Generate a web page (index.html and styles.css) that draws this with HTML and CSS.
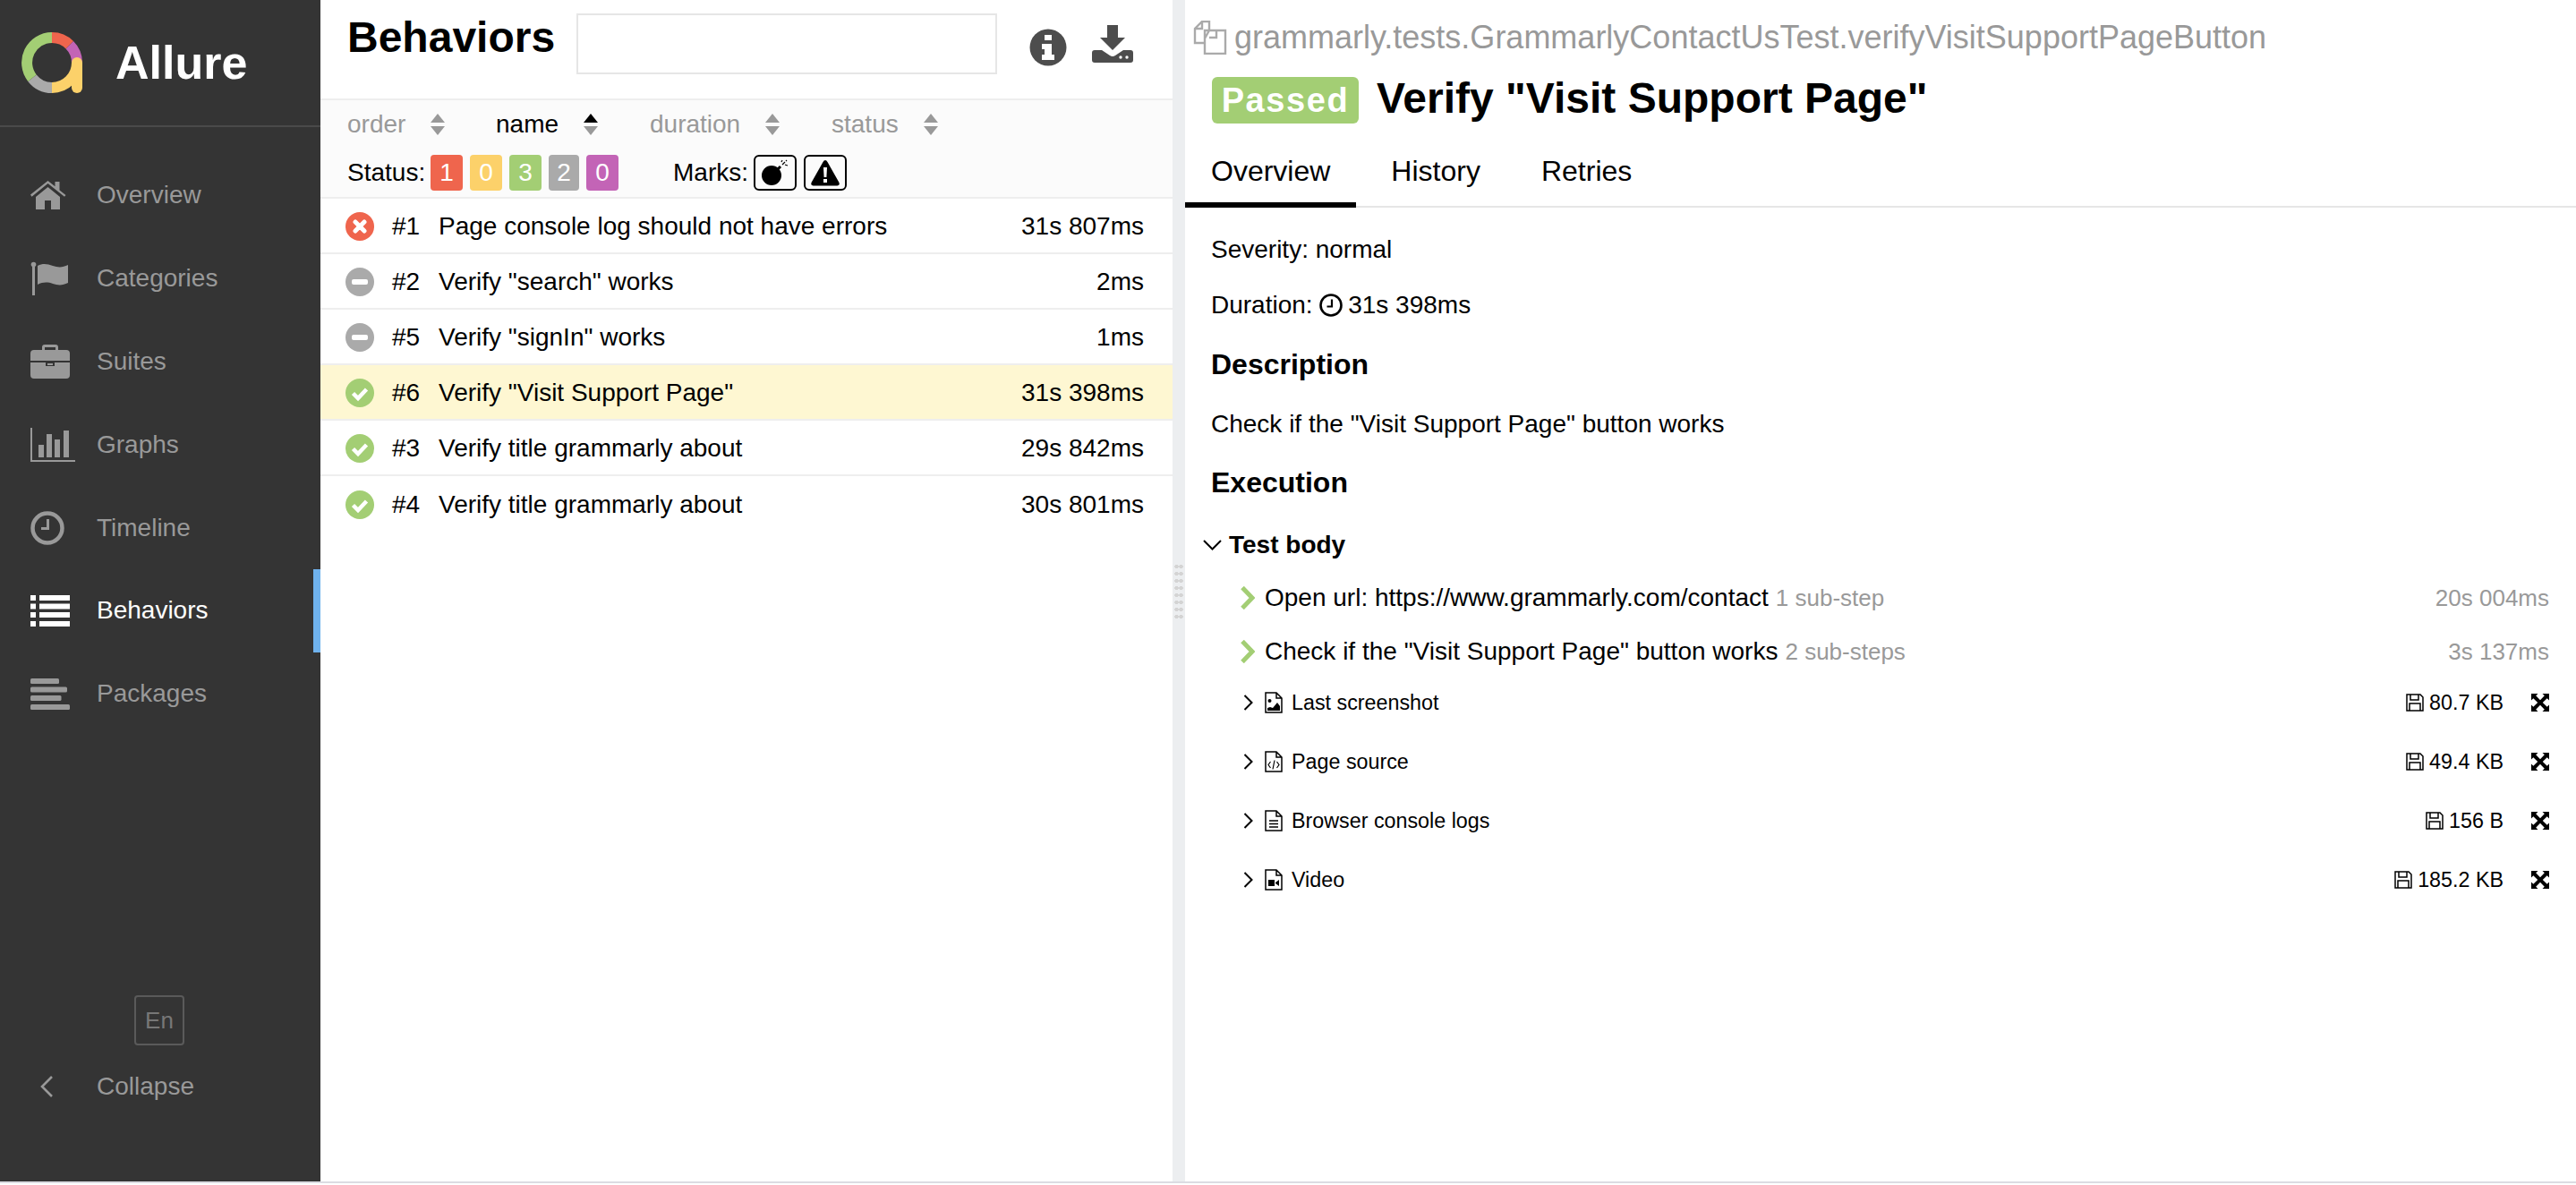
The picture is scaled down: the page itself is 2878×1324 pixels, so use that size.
FILE: index.html
```html
<!DOCTYPE html>
<html lang="en">
<head>
    <meta charset="UTF-8">
    <title>Allure Report</title>
    <link rel="stylesheet" href="styles.css">
</head>
<body>
    <div class="app">
        <!-- Side navigation -->
        <aside class="side">
            <div class="brand">
                <svg class="brand-logo" viewBox="0 0 68 68">
                    <path d="M34 6A28 28 0 0 1 53.8 14.2" fill="none" stroke="#ef654d" stroke-width="12"/>
                    <path d="M53.8 14.2A28 28 0 0 1 62 34" fill="none" stroke="#c364b6" stroke-width="12"/>
                    <path d="M62 34A28 28 0 0 1 34 62" fill="none" stroke="#fcd16a" stroke-width="12"/>
                    <path d="M62 34V62" fill="none" stroke="#fcd16a" stroke-width="12" stroke-linecap="round"/>
                    <path d="M34 62A28 28 0 0 1 12 51.2" fill="none" stroke="#aaa" stroke-width="12"/>
                    <path d="M12 51.2A28 28 0 0 1 34 6" fill="none" stroke="#a3ce74" stroke-width="12"/>
                </svg>
                <span class="brand-name">Allure</span>
            </div>
            <nav class="nav">
                <a class="nav-item">
                    <span class="nav-icon"><svg width="40" height="32" viewBox="0 0 40 32"><path d="M0 15.5 19.5 0l8 6.3V1h5v9.4l7 5.6-1.500 1.800L19.500 3 1.500 17.800z M6 18 19.500 7 33 18v14H23V22h-7v10H6z" fill="currentColor"/></svg></span>
                    <span>Overview</span>
                </a>
                <a class="nav-item">
                    <span class="nav-icon"><svg width="44" height="38" viewBox="0 0 44 38"><circle cx="3.500" cy="3.500" r="2.800" fill="currentColor"/><rect x="2" y="4" width="3" height="34" fill="currentColor"/><path d="M8 5c6-3 11-2 17 0 6 2 11 2 17-1v20c-6 3-11 3-17 1-6-2-11-2-17 1z" fill="currentColor"/></svg></span>
                    <span>Categories</span>
                </a>
                <a class="nav-item">
                    <span class="nav-icon"><svg width="44" height="38" viewBox="0 0 44 38"><path d="M13 6V3q0-3 3-3h12q3 0 3 3v3h9q4 0 4 4v8H0v-8q0-4 4-4z M16 6h12V3H16z" fill="currentColor" fill-rule="evenodd"/><path d="M0 20h17v4h10v-4h17v14q0 4-4 4H4q-4 0-4-4z M19 21h6v2h-6z" fill="currentColor"/></svg></span>
                    <span>Suites</span>
                </a>
                <a class="nav-item">
                    <span class="nav-icon"><svg width="50" height="38" viewBox="0 0 50 38"><path d="M0 0h2v36h48v2H0z M9 19h6v14H9z M18 7h6v26h-6z M27 13h6v20h-6z M37 3h6v30h-6z" fill="currentColor"/></svg></span>
                    <span>Graphs</span>
                </a>
                <a class="nav-item">
                    <span class="nav-icon"><svg width="38" height="38" viewBox="0 0 38 38"><circle cx="19" cy="19" r="16.500" fill="none" stroke="currentColor" stroke-width="4.500"/><path d="M21 9v12h-9v-3h6V9z" fill="currentColor"/></svg></span>
                    <span>Timeline</span>
                </a>
                <a class="nav-item nav-item-active">
                    <span class="nav-icon"><svg width="44" height="35" viewBox="0 0 44 35"><path d="M0 0h6v6H0z M10 0h34v6H10z M0 9.500h6v6H0z M10 9.500h34v6H10z M0 19h6v6H0z M10 19h34v6H10z M0 29h6v6H0z M10 29h34v6H10z" fill="currentColor"/></svg></span>
                    <span>Behaviors</span>
                </a>
                <a class="nav-item">
                    <span class="nav-icon"><svg width="44" height="35" viewBox="0 0 44 35"><rect width="32" height="6" rx="1.500" fill="currentColor"/><rect y="9.500" width="41" height="6" rx="1.500" fill="currentColor"/><rect y="19" width="34.500" height="6" rx="1.500" fill="currentColor"/><rect y="29" width="44" height="6" rx="1.500" fill="currentColor"/></svg></span>
                    <span>Packages</span>
                </a>
            </nav>
            <div class="side-foot">
                <div class="lang-box">En</div>
                <a class="collapse">
                    <span class="collapse-icon"><svg width="16" height="26" viewBox="0 0 16 26"><path d="M14 2 3 13l11 11" fill="none" stroke="currentColor" stroke-width="2.600"/></svg></span>
                    <span>Collapse</span>
                </a>
            </div>
        </aside>

        <!-- Behaviors tree -->
        <section class="tree">
            <div class="tree-head">
                <h2 class="tree-title">Behaviors</h2>
                <input class="tree-search" type="text">
                <svg class="tree-info" width="42" height="42" viewBox="0 0 42 42"><circle cx="21" cy="21" r="20.500" fill="#4d4d4d"/><path d="M17 7h8v6h-8z M14 17h11v12h3v6H14v-6h3v-6h-3z" fill="#fff"/></svg>
                <svg class="tree-download" width="46" height="42" viewBox="0 0 46 42"><path d="M17 0h12v14h8L23 28 9 14h8z" fill="#4d4d4d"/><path d="M0 31q0-3 3-3h8l9 6q3 2 6 0l9-6h8q3 0 3 3v8q0 3-3 3H3q-3 0-3-3z" fill="#4d4d4d"/><circle cx="32" cy="36" r="1.700" fill="#fff"/><circle cx="39" cy="36" r="1.700" fill="#fff"/></svg>
            </div>
            <div class="filters">
                <div class="sorters">
                    <span class="sorter sorter-order">order <i class="sort-arrows"></i></span>
                    <span class="sorter sorter-name sorter-active">name <i class="sort-arrows"></i></span>
                    <span class="sorter sorter-duration">duration <i class="sort-arrows"></i></span>
                    <span class="sorter sorter-status">status <i class="sort-arrows"></i></span>
                </div>
                <div class="marks-line">
                    <span class="status-label">Status:</span>
                    <span class="count count-failed">1</span>
                    <span class="count count-broken">0</span>
                    <span class="count count-passed">3</span>
                    <span class="count count-skipped">2</span>
                    <span class="count count-unknown">0</span>
                    <span class="marks-label">Marks:</span>
                    <span class="mark">
                        <svg width="34" height="30" viewBox="0 0 34 30"><circle cx="13" cy="18" r="11" fill="#000"/><path d="M20 11l3-3" stroke="#000" stroke-width="3"/><path d="M25 6l3-3 M28 6l3 1 M24 3l1-2 M29 2l1-1" stroke="#000" stroke-width="1.200"/></svg>
                    </span>
                    <span class="mark">
                        <svg width="34" height="30" viewBox="0 0 34 30"><path d="M17 1q1.500 0 2.500 2l13 23q1 3-2 3.500h-27q-3-.5-2-3.500l13-23q1-2 2.500-2z" fill="#000"/><path d="M15 9h4l-.6 11h-2.800z M15 22h4v4h-4z" fill="#fff"/></svg>
                    </span>
                </div>
            </div>
            <div class="tree-rows">
                <a class="row">
                    <svg class="row-icon" viewBox="0 0 32 32"><circle cx="16" cy="16" r="16" fill="#ef654d"/><path d="M11 11l10 10M21 11 11 21" stroke="#fff" stroke-width="5" stroke-linecap="round"/></svg>
                    <span class="row-order">#1</span>
                    <span class="row-name">Page console log should not have errors</span>
                    <span class="row-time">31s 807ms</span>
                </a>
                <a class="row">
                    <svg class="row-icon" viewBox="0 0 32 32"><circle cx="16" cy="16" r="16" fill="#aaa"/><rect x="7" y="13" width="18" height="6" rx="2" fill="#fff"/></svg>
                    <span class="row-order">#2</span>
                    <span class="row-name">Verify "search" works</span>
                    <span class="row-time">2ms</span>
                </a>
                <a class="row">
                    <svg class="row-icon" viewBox="0 0 32 32"><circle cx="16" cy="16" r="16" fill="#aaa"/><rect x="7" y="13" width="18" height="6" rx="2" fill="#fff"/></svg>
                    <span class="row-order">#5</span>
                    <span class="row-name">Verify "signIn" works</span>
                    <span class="row-time">1ms</span>
                </a>
                <a class="row row-active">
                    <svg class="row-icon" viewBox="0 0 32 32"><circle cx="16" cy="16" r="16" fill="#a3ce74"/><path d="M8.500 16.500l5.500 5.500 9.500-10" fill="none" stroke="#fff" stroke-width="4.500"/></svg>
                    <span class="row-order">#6</span>
                    <span class="row-name">Verify "Visit Support Page"</span>
                    <span class="row-time">31s 398ms</span>
                </a>
                <a class="row">
                    <svg class="row-icon" viewBox="0 0 32 32"><circle cx="16" cy="16" r="16" fill="#a3ce74"/><path d="M8.500 16.500l5.500 5.500 9.500-10" fill="none" stroke="#fff" stroke-width="4.500"/></svg>
                    <span class="row-order">#3</span>
                    <span class="row-name">Verify title grammarly about</span>
                    <span class="row-time">29s 842ms</span>
                </a>
                <a class="row row-last">
                    <svg class="row-icon" viewBox="0 0 32 32"><circle cx="16" cy="16" r="16" fill="#a3ce74"/><path d="M8.500 16.500l5.500 5.500 9.500-10" fill="none" stroke="#fff" stroke-width="4.500"/></svg>
                    <span class="row-order">#4</span>
                    <span class="row-name">Verify title grammarly about</span>
                    <span class="row-time">30s 801ms</span>
                </a>
            </div>
        </section>

        <div class="gutter"><div class="gutter-grip"></div></div>

        <!-- Test result -->
        <section class="result">
            <div class="result-path">
                <svg class="copy-icon" width="38" height="38" viewBox="0 0 38 38"><path d="M13 25H2V9l8-8h8v10 M10 1v8H2 M13 11h23v26H13z M26 11v8h-8 M13 20l5-9" fill="none" stroke="#aaa" stroke-width="2.400"/></svg>
                <span>grammarly.tests.GrammarlyContactUsTest.verifyVisitSupportPageButton</span>
            </div>
            <div class="result-title">
                <span class="status-badge">Passed</span>
                <h2 class="result-name">Verify "Visit Support Page"</h2>
            </div>
            <div class="tabs">
                <a class="tab tab-active">Overview</a>
                <a class="tab">History</a>
                <a class="tab">Retries</a>
            </div>
            <div class="result-body">
                <p class="meta">Severity: normal</p>
                <p class="meta meta-time">Duration: <svg class="meta-clock" width="26" height="26" viewBox="0 0 26 26"><circle cx="13" cy="13" r="11.500" fill="none" stroke="#000" stroke-width="2.600"/><path d="M14 6.500v8H8.500" fill="none" stroke="#000" stroke-width="2.200"/></svg> 31s 398ms</p>
                <h3 class="section-title">Description</h3>
                <p class="desc">Check if the "Visit Support Page" button works</p>
                <h3 class="section-title section-exec">Execution</h3>
                <div class="stage">
                    <svg width="21" height="12" viewBox="0 0 21 12"><path d="M1 1l9.500 9.500L20 1" fill="none" stroke="#000" stroke-width="2"/></svg>
                    <span>Test body</span>
                </div>

                <div class="step">
                    <svg class="step-arrow" width="16" height="26" viewBox="0 0 16 26"><path d="M2 1.500 13 13 2 24.500" fill="none" stroke="#a3ce74" stroke-width="5"/></svg>
                    <span class="step-name">Open url: https://www.grammarly.com/contact</span>
                    <span class="step-sub">1 sub-step</span>
                    <span class="step-time">20s 004ms</span>
                </div>
                <div class="step">
                    <svg class="step-arrow" width="16" height="26" viewBox="0 0 16 26"><path d="M2 1.500 13 13 2 24.500" fill="none" stroke="#a3ce74" stroke-width="5"/></svg>
                    <span class="step-name">Check if the "Visit Support Page" button works</span>
                    <span class="step-sub">2 sub-steps</span>
                    <span class="step-time">3s 137ms</span>
                </div>

                <div class="attach">
                    <svg class="attach-arrow" width="11" height="18" viewBox="0 0 11 18"><path d="M1.500 1 9.500 9l-8 8" fill="none" stroke="#000" stroke-width="2"/></svg>
                    <svg class="attach-file" width="20" height="24" viewBox="0 0 20 24"><path d="M1 1h12l6 6v16H1z M13 1v6h6" fill="none" stroke="#000" stroke-width="1.500"/><circle cx="5.500" cy="10" r="2" fill="#000"/><path d="M3 21v-3l3-1 3 1 5-6 3 4v5z" fill="#000"/></svg>
                    <span class="attach-name">Last screenshot</span>
                    <span class="attach-size"><svg class="disk" width="20" height="20" viewBox="0 0 20 20"><path d="M1 1h15l3 3v15H1z M5 1v6h9V1 M4 19v-8h12v8" fill="none" stroke="#000" stroke-width="1.500"/></svg> 80.7 KB</span>
                    <svg class="attach-expand" width="20" height="20" viewBox="0 0 20 20"><path d="M0 0h7.500L5.200 2.300 10 7.200l4.800-4.900L12.500 0H20v7.500l-2.300-2.300L12.800 10l4.900 4.800 2.300-2.300V20h-7.500l2.300-2.300L10 12.800l-4.800 4.900 2.300 2.300H0v-7.500l2.300 2.300L7.200 10 2.300 5.200 0 7.500z" fill="#000"/></svg>
                </div>
                <div class="attach">
                    <svg class="attach-arrow" width="11" height="18" viewBox="0 0 11 18"><path d="M1.500 1 9.500 9l-8 8" fill="none" stroke="#000" stroke-width="2"/></svg>
                    <svg class="attach-file" width="20" height="24" viewBox="0 0 20 24"><path d="M1 1h12l6 6v16H1z M13 1v6h6" fill="none" stroke="#000" stroke-width="1.500"/><path d="M6.500 12 4 15.500 6.500 19 M13.500 12 16 15.500 13.500 19 M11 10.500 9 20.500" fill="none" stroke="#000" stroke-width="1.200"/></svg>
                    <span class="attach-name">Page source</span>
                    <span class="attach-size"><svg class="disk" width="20" height="20" viewBox="0 0 20 20"><path d="M1 1h15l3 3v15H1z M5 1v6h9V1 M4 19v-8h12v8" fill="none" stroke="#000" stroke-width="1.500"/></svg> 49.4 KB</span>
                    <svg class="attach-expand" width="20" height="20" viewBox="0 0 20 20"><path d="M0 0h7.500L5.200 2.300 10 7.200l4.800-4.900L12.500 0H20v7.500l-2.300-2.300L12.800 10l4.900 4.800 2.300-2.300V20h-7.500l2.300-2.300L10 12.800l-4.800 4.900 2.300 2.300H0v-7.500l2.300 2.300L7.200 10 2.300 5.200 0 7.500z" fill="#000"/></svg>
                </div>
                <div class="attach">
                    <svg class="attach-arrow" width="11" height="18" viewBox="0 0 11 18"><path d="M1.500 1 9.500 9l-8 8" fill="none" stroke="#000" stroke-width="2"/></svg>
                    <svg class="attach-file" width="20" height="24" viewBox="0 0 20 24"><path d="M1 1h12l6 6v16H1z M13 1v6h6" fill="none" stroke="#000" stroke-width="1.500"/><path d="M5 12h10 M5 15.500h10 M5 19h10" fill="none" stroke="#000" stroke-width="1.300"/></svg>
                    <span class="attach-name">Browser console logs</span>
                    <span class="attach-size"><svg class="disk" width="20" height="20" viewBox="0 0 20 20"><path d="M1 1h15l3 3v15H1z M5 1v6h9V1 M4 19v-8h12v8" fill="none" stroke="#000" stroke-width="1.500"/></svg> 156 B</span>
                    <svg class="attach-expand" width="20" height="20" viewBox="0 0 20 20"><path d="M0 0h7.500L5.200 2.300 10 7.200l4.800-4.900L12.500 0H20v7.500l-2.300-2.300L12.800 10l4.900 4.800 2.300-2.300V20h-7.500l2.300-2.300L10 12.800l-4.800 4.900 2.300 2.300H0v-7.500l2.300 2.300L7.200 10 2.300 5.200 0 7.500z" fill="#000"/></svg>
                </div>
                <div class="attach">
                    <svg class="attach-arrow" width="11" height="18" viewBox="0 0 11 18"><path d="M1.500 1 9.500 9l-8 8" fill="none" stroke="#000" stroke-width="2"/></svg>
                    <svg class="attach-file" width="20" height="24" viewBox="0 0 20 24"><path d="M1 1h12l6 6v16H1z M13 1v6h6" fill="none" stroke="#000" stroke-width="1.500"/><path d="M4 12h7v7H4z M12 15l4-3v7l-4-3z" fill="#000"/></svg>
                    <span class="attach-name">Video</span>
                    <span class="attach-size"><svg class="disk" width="20" height="20" viewBox="0 0 20 20"><path d="M1 1h15l3 3v15H1z M5 1v6h9V1 M4 19v-8h12v8" fill="none" stroke="#000" stroke-width="1.500"/></svg> 185.2 KB</span>
                    <svg class="attach-expand" width="20" height="20" viewBox="0 0 20 20"><path d="M0 0h7.500L5.200 2.300 10 7.200l4.800-4.900L12.500 0H20v7.500l-2.300-2.300L12.800 10l4.900 4.800 2.300-2.300V20h-7.500l2.300-2.300L10 12.800l-4.800 4.900 2.300 2.300H0v-7.500l2.300 2.300L7.200 10 2.300 5.200 0 7.500z" fill="#000"/></svg>
                </div>
            </div>
        </section>
    </div>
</body>
</html>
```

FILE: styles.css
```css
* {
    box-sizing: border-box;
}
html, body {
    height: 100%;
}
body {
    margin: 0;
    overflow: hidden;
    background-color: #fff;
    color: #000;
    font-family: "Liberation Sans", Arial, sans-serif;
    font-size: 28px;
}
.app {
    display: flex;
    height: 1322px;
    border-bottom: 2px solid #dcdce2;
}

/* Side navigation */
.side {
    width: 358px;
    flex: none;
    display: flex;
    flex-direction: column;
    background-color: #343434;
    color: #999;
}
.brand {
    height: 142px;
    flex: none;
    display: flex;
    align-items: center;
    padding-left: 24px;
    border-bottom: 2px solid #4a4a4a;
}
.brand-logo {
    width: 68px;
    height: 68px;
    flex: none;
}
.brand-name {
    margin-left: 37px;
    color: #fff;
    font-size: 52px;
    font-weight: bold;
}
.nav {
    padding-top: 30px;
}
.nav-item {
    height: 92.8px;
    display: flex;
    align-items: center;
    padding-left: 34px;
}
.nav-icon {
    width: 74px;
    flex: none;
    display: flex;
    align-items: center;
}
.nav-item-active {
    color: #fff;
    border-right: 8px solid #6fb2ed;
}
.side-foot {
    margin-top: auto;
    padding-bottom: 90px;
}
.lang-box {
    width: 56px;
    height: 56px;
    margin-left: 150px;
    display: flex;
    align-items: center;
    justify-content: center;
    border: 2px solid #5a5a5a;
    border-radius: 4px;
    color: #777;
    font-size: 26px;
}
.collapse {
    display: flex;
    align-items: center;
    margin-top: 30px;
    padding-left: 44px;
}
.collapse-icon {
    width: 64px;
    display: flex;
}

/* Behaviors tree */
.tree {
    width: 952px;
    flex: none;
    display: flex;
    flex-direction: column;
}
.tree-head {
    height: 110px;
    flex: none;
    display: flex;
    align-items: flex-start;
    padding-left: 30px;
}
.tree-title {
    margin: 14px 0 0;
    width: 254px;
    font-size: 48px;
    line-height: 56px;
}
.tree-search {
    width: 470px;
    height: 68px;
    margin: 15px 0 0 2px;
    background-color: #fff;
    border: 2px solid #e6e6e6;
    border-radius: 0;
}
.tree-info {
    margin: 32px 0 0 36px;
}
.tree-download {
    margin: 28px 0 0 28px;
}
.filters {
    height: 112px;
    flex: none;
    background-color: #fbfbfb;
    border-top: 2px solid #eee;
    border-bottom: 2px solid #eee;
    padding-left: 30px;
}
.sorters {
    display: flex;
    height: 54px;
    align-items: center;
    color: #999;
}
.sorter {
    display: flex;
    align-items: center;
}
.sorter-active {
    color: #000;
}
.sorter-order {
    width: 166px;
}
.sorter-name {
    width: 172px;
}
.sorter-duration {
    width: 203px;
}
.sort-arrows {
    position: relative;
    width: 16px;
    height: 24px;
    margin-left: 28px;
    display: block;
}
.sorter-duration .sort-arrows {
    margin-left: 28px;
}
.sort-arrows::before,
.sort-arrows::after {
    content: "";
    position: absolute;
    left: 0;
    border-left: 8px solid transparent;
    border-right: 8px solid transparent;
}
.sort-arrows::before {
    top: 0;
    border-bottom: 10px solid #999;
}
.sort-arrows::after {
    bottom: 0;
    border-top: 10px solid #999;
}
.sorter-active .sort-arrows::before {
    border-bottom-color: #000;
}
.marks-line {
    display: flex;
    align-items: center;
    height: 40px;
    margin-top: 7px;
}
.status-label {
    width: 93px;
}
.count {
    width: 36px;
    height: 40px;
    margin-right: 8px;
    display: flex;
    align-items: center;
    justify-content: center;
    border-radius: 4px;
    color: #fff;
}
.count-failed {
    background-color: #ef654d;
}
.count-broken {
    background-color: #fcd16a;
}
.count-passed {
    background-color: #a3ce74;
}
.count-skipped {
    width: 34px;
    background-color: #aaa;
}
.count-unknown {
    background-color: #c364b6;
}
.marks-label {
    width: 90px;
    margin-left: 53px;
}
.mark {
    width: 48px;
    height: 40px;
    margin-right: 8px;
    display: flex;
    align-items: center;
    justify-content: center;
    border: 2px solid #000;
    border-radius: 6px;
}
.tree-rows {
    flex: 1;
}
.row {
    height: 62px;
    display: flex;
    align-items: center;
    padding: 1px 32px 0 28px;
    border-bottom: 2px solid #eee;
}
.row-last {
    border-bottom: 0;
}
.row-active {
    background-color: #fef7d2;
}
.row-icon {
    width: 32px;
    height: 32px;
    flex: none;
}
.row-order {
    width: 52px;
    margin-left: 20px;
}
.row-time {
    margin-left: auto;
}

/* Splitter */
.gutter {
    width: 14px;
    flex: none;
    display: flex;
    align-items: center;
    justify-content: center;
    background-color: #eceef0;
}
.gutter-grip {
    width: 10px;
    height: 62px;
    background-image: radial-gradient(circle, #d4d4d4 2px, transparent 2.500px);
    background-size: 5px 8px;
}

/* Test result */
.result {
    flex: 1;
    min-width: 0;
}
.result-path {
    display: flex;
    align-items: center;
    height: 44px;
    margin-top: 20px;
    padding-left: 9px;
    color: #999;
    font-size: 36px;
}
.copy-icon {
    margin-right: 8px;
}
.result-title {
    display: flex;
    align-items: center;
    height: 52px;
    margin-top: 22px;
    padding-left: 30px;
}
.status-badge {
    width: 164px;
    height: 52px;
    display: flex;
    align-items: center;
    justify-content: center;
    border-radius: 6px;
    background-color: #a3ce74;
    color: #fff;
    font-size: 38px;
    font-weight: bold;
    letter-spacing: 1.600px;
}
.result-name {
    margin: -4px 0 0 20px;
    font-size: 48px;
    line-height: 52px;
}
.tabs {
    display: flex;
    gap: 10px;
    height: 94px;
    border-bottom: 2px solid #e6e6e6;
}
.tab {
    padding: 34px 29px 0;
    font-size: 32px;
    line-height: 38px;
    margin-bottom: -2px;
}
.tab-active {
    border-bottom: 6px solid #000;
}
.result-body {
    padding: 1px 30px 0 29px;
}
.meta,
.desc {
    margin: 0;
    line-height: 34px;
}
.meta {
    padding-top: 29px;
}
.meta-time {
    padding-top: 28px;
}
.meta-clock {
    margin-right: -2px;
    vertical-align: -4px;
}
.section-title {
    margin: 30px 0 0;
    font-size: 32px;
    line-height: 38px;
}
.desc {
    margin-top: 31px;
}
.section-exec {
    margin-top: 29px;
}
.stage {
    display: flex;
    align-items: center;
    margin: 34px 0 0 -9px;
    height: 34px;
    font-weight: bold;
}
.stage svg {
    margin-right: 8px;
}
.step {
    display: flex;
    align-items: center;
    height: 48px;
    padding-left: 33px;
}
.stage + .step {
    margin-top: 18px;
}
.step + .step {
    margin-top: 12px;
}
.step-arrow {
    margin-right: 11px;
}
.step-sub {
    margin-left: 8px;
    color: #999;
    font-size: 26px;
}
.step-time {
    margin-left: auto;
    color: #999;
    font-size: 26px;
}
.attach {
    display: flex;
    align-items: center;
    height: 66px;
    padding-left: 36px;
    font-size: 23.300px;
}
.attach-file {
    margin-left: 13px;
    margin-right: 10px;
}
.attach-size {
    margin-left: auto;
    display: flex;
    align-items: center;
}
.disk {
    margin-right: 6px;
}
.attach-expand {
    margin-left: 31px;
}
```
